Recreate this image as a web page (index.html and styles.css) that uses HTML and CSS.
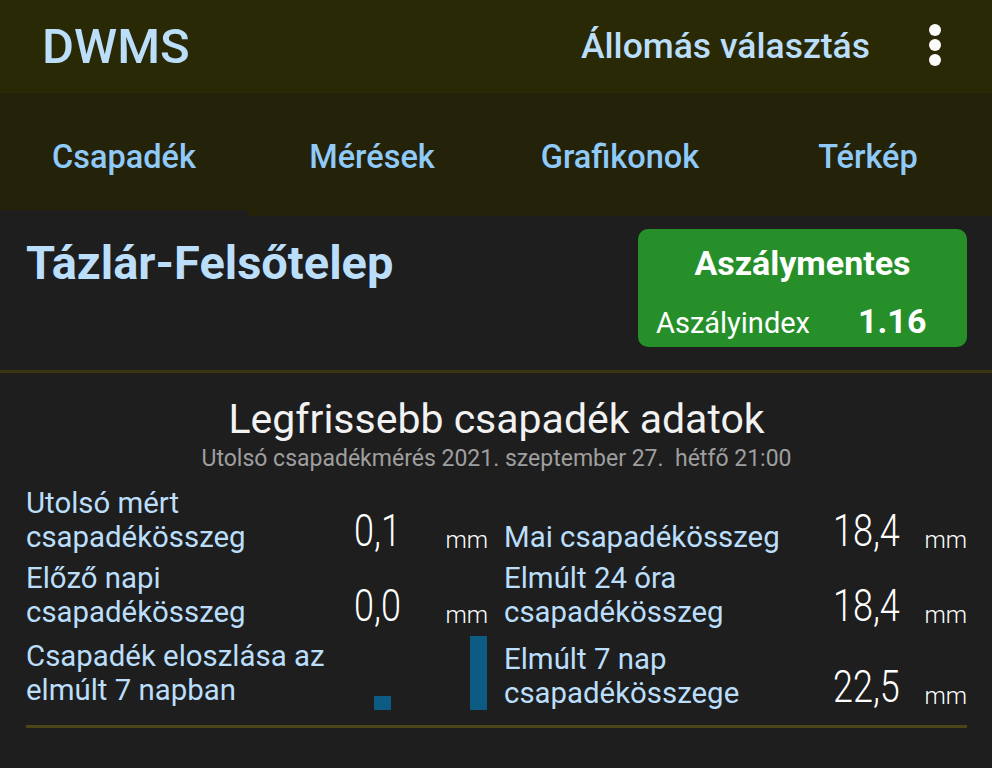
FILE: index.html
```html
<!DOCTYPE html>
<html lang="hu">
<head>
<meta charset="utf-8">
<title>DWMS</title>
<link rel="stylesheet" href="styles.css">
</head>
<body>
<header class="appbar">
  <div class="brand">DWMS</div>
  <div class="action">Állomás választás</div>
  <div class="more" aria-label="Továbbiak"><span></span><span></span><span></span></div>
</header>
<nav class="tabs">
  <div class="tab active">Csapadék</div>
  <div class="tab">Mérések</div>
  <div class="tab">Grafikonok</div>
  <div class="tab">Térkép</div>
</nav>
<section class="station">
  <h1 class="station-name">Tázlár-Felsőtelep</h1>
  <div class="drought">
    <div class="drought-title">Aszálymentes</div>
    <div class="drought-row">
      <span class="drought-label">Aszályindex</span>
      <span class="drought-value">1.16</span>
    </div>
  </div>
</section>
<section class="latest">
  <h2 class="latest-title">Legfrissebb csapadék adatok</h2>
  <div class="latest-sub">Utolsó csapadékmérés 2021. szeptember 27.&nbsp; hétfő 21:00</div>
  <div class="grid">
    <div class="item">
      <div class="label">Utolsó mért<br>csapadékösszeg</div>
      <div class="value"><span>0,1</span></div>
      <div class="unit">mm</div>
    </div>
    <div class="item">
      <div class="label">Mai csapadékösszeg</div>
      <div class="value"><span>18,4</span></div>
      <div class="unit">mm</div>
    </div>
    <div class="item">
      <div class="label">Előző napi<br>csapadékösszeg</div>
      <div class="value"><span>0,0</span></div>
      <div class="unit">mm</div>
    </div>
    <div class="item">
      <div class="label">Elmúlt 24 óra<br>csapadékösszeg</div>
      <div class="value"><span>18,4</span></div>
      <div class="unit">mm</div>
    </div>
    <div class="item">
      <div class="label label-chart">Csapadék eloszlása az<br>elmúlt 7 napban</div>
      <div class="chart">
        <div class="slot"><div class="bar" style="height:0px"></div></div>
        <div class="slot"><div class="bar" style="height:14px"></div></div>
        <div class="slot"><div class="bar" style="height:0px"></div></div>
        <div class="slot"><div class="bar" style="height:0px"></div></div>
        <div class="slot"><div class="bar" style="height:0px"></div></div>
        <div class="slot"><div class="bar" style="height:0px"></div></div>
        <div class="slot"><div class="bar" style="height:74px"></div></div>
      </div>
    </div>
    <div class="item">
      <div class="label">Elmúlt 7 nap<br>csapadékösszege</div>
      <div class="value"><span>22,5</span></div>
      <div class="unit">mm</div>
    </div>
  </div>
  <div class="rule"></div>
</section>
</body>
</html>
```
FILE: styles.css
```css
* { box-sizing: border-box; }
html, body { margin: 0; padding: 0; }
body {
  background: #1e1e1e;
  font-family: Roboto, "Noto Sans", "Liberation Sans", sans-serif;
  color: #ffffff;
  width: 992px;
  height: 768px;
  overflow: hidden;
}

.appbar {
  height: 93px;
  background: #2a2906;
  display: flex;
  align-items: center;
  padding: 0 0 0 42px;
}
.brand {
  font-size: 49px;
  font-weight: 500;
  color: #bbdefb;
  flex: 1;
  line-height: 1;
}
.action {
  font-size: 35.5px;
  font-weight: 500;
  color: #bbdefb;
  line-height: 1;
}
.more {
  width: 122px;
  display: flex;
  flex-direction: column;
  align-items: center;
  gap: 3px;
  padding-left: 8px;
  margin-top: -3px;
}
.more span {
  width: 12px;
  height: 12px;
  border-radius: 50%;
  background: #fafafa;
}

.tabs {
  height: 123px;
  background: #242209;
  display: grid;
  grid-template-columns: repeat(4, 1fr);
}
.tab {
  display: flex;
  align-items: center;
  justify-content: center;
  font-size: 32.5px;
  font-weight: 500;
  color: #90caf9;
  padding-top: 13px;
  padding-bottom: 2px;
  border-bottom: 6px solid transparent;
}
.tab.active { border-bottom-color: #1e1e1e; }

.station {
  display: flex;
  justify-content: space-between;
  align-items: flex-start;
  padding: 13px 25px 23px 26px;
  border-bottom: 3px solid #3a3510;
}
.station-name {
  margin: 10px 0 0;
  font-size: 47px;
  font-weight: 700;
  color: #bbdefb;
  line-height: 1;
}
.drought {
  width: 329px;
  height: 118px;
  background: #268f2a;
  border-radius: 10px;
  padding: 14px 18px 0 18px;
  display: flex;
  flex-direction: column;
}
.drought-title {
  text-align: center;
  font-size: 34px;
  font-weight: 700;
  line-height: 40px;
  color: #ffffff;
}
.drought-row {
  display: flex;
  align-items: baseline;
  margin-top: 18px;
  line-height: 40px;
}
.drought-label {
  font-size: 29px;
  color: #ffffff;
  width: 202px;
}
.drought-value {
  font-size: 34px;
  font-weight: 700;
}

.latest {
  padding: 22px 25px 0 26px;
}
.latest-title {
  margin: 0;
  text-align: center;
  font-size: 41px;
  font-weight: 400;
  line-height: 48px;
  color: #f2f2f2;
}
.latest-sub {
  text-align: center;
  font-size: 23px;
  color: #9e9e9e;
  line-height: 30px;
  margin-top: 1px;
}
.grid {
  display: grid;
  grid-template-columns: 462px 463px;
  column-gap: 16px;
  row-gap: 7px;
  margin-top: 12px;
}
.item {
  display: flex;
  align-items: flex-end;
}
.label {
  width: 329px;
  font-size: 29.4px;
  line-height: 34px;
  color: #bbdefb;
}
.label-chart { margin-bottom: 3px; }
.value {
  width: 92px;
  font-size: 45px;
  font-weight: 300;
  line-height: 46px;
  color: #ffffff;
}
.value span {
  display: inline-block;
  transform: scaleX(0.8);
  transform-origin: left bottom;
}
.unit {
  font-size: 24px;
  font-weight: 300;
  line-height: 27px;
  color: #ffffff;
}
.chart {
  width: 135px;
  height: 74px;
  display: flex;
  align-items: flex-end;
}
.slot {
  flex: 1;
  display: flex;
  justify-content: center;
  align-items: flex-end;
}
.bar {
  width: 17px;
  background: #0d5a82;
}
.rule {
  height: 3px;
  background: #4a4417;
  margin-top: 15px;
}
```
